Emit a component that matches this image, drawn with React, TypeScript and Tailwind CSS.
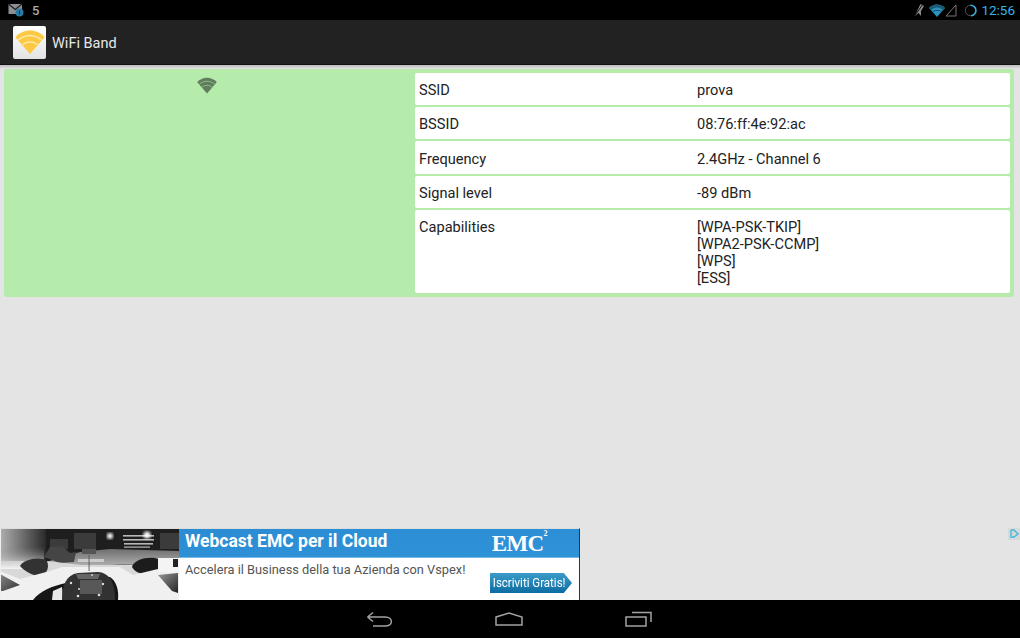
import React from "react";

const rows: { k: string; v: string[]; h: string }[] = [
  { k: "SSID", v: ["prova"], h: "h-8 pt-[9px]" },
  { k: "BSSID", v: ["08:76:ff:4e:92:ac"], h: "h-8 pt-[9px]" },
  { k: "Frequency", v: ["2.4GHz - Channel 6"], h: "h-[33px] pt-[10px]" },
  { k: "Signal level", v: ["-89 dBm"], h: "h-8 pt-[9px]" },
  { k: "Capabilities", v: ["[WPA-PSK-TKIP]", "[WPA2-PSK-CCMP]", "[WPS]", "[ESS]"], h: "h-[83px] pt-[9px]" },
];

function Wifi({ color, gap, className }: { color: string; gap: string; className?: string }) {
  return (
    <svg viewBox="0 0 40 32" className={className}>
      <path d="M0.5 9.5 C10 -2.5 30 -2.5 39.5 9.5 L20 32 Z" fill={color} />
      <g fill="none" stroke={gap} strokeWidth="1.5">
        <path d="M4.5 13.5 C13 5.5 27 5.5 35.5 13.5" />
        <path d="M10 19.5 C16 14.5 24 14.5 30 19.5" />
      </g>
    </svg>
  );
}

function F1Photo() {
  return (
    <svg viewBox="0 0 179 71" preserveAspectRatio="none" className="w-[179px] h-[71px] block">
      <defs>
        <linearGradient id="left" x1="0" y1="0" x2="1" y2="0">
          <stop offset="0" stopColor="#b0b0b0" />
          <stop offset="1" stopColor="#2a2a2a" />
        </linearGradient>
        <linearGradient id="track" x1="0" y1="0" x2="0" y2="1">
          <stop offset="0" stopColor="#6e6e6e" />
          <stop offset="1" stopColor="#b4b4b4" />
        </linearGradient>
        <linearGradient id="fade" x1="0" y1="0" x2="0" y2="1">
          <stop offset="0" stopColor="#888" stopOpacity="0" />
          <stop offset="1" stopColor="#f4f4f4" />
        </linearGradient>
        <linearGradient id="wingL" x1="0" y1="0" x2="1" y2="1">
          <stop offset="0" stopColor="#888" />
          <stop offset="1" stopColor="#333" />
        </linearGradient>
        <linearGradient id="wingR" x1="0" y1="0" x2="1" y2="1">
          <stop offset="0" stopColor="#999" />
          <stop offset="1" stopColor="#222" />
        </linearGradient>
        <filter id="b1"><feGaussianBlur stdDeviation="0.6" /></filter>
        <filter id="b2"><feGaussianBlur stdDeviation="1.6" /></filter>
      </defs>
      <rect width="179" height="71" fill="#1e1e1e" />
      <rect width="46" height="32" fill="url(#left)" />
      <g fill="#3a3a3a" filter="url(#b1)">
        <rect x="74" y="4" width="22" height="16" />
        <rect x="50" y="10" width="18" height="10" />
        <rect x="160" y="4" width="19" height="16" />
      </g>
      <g fill="#b8b8b8" filter="url(#b1)">
        <rect x="123" y="6" width="31" height="1.6" />
        <rect x="123" y="10" width="31" height="1.6" />
        <rect x="124" y="14" width="29" height="1.6" />
        <rect x="124" y="17.5" width="26" height="1.2" />
      </g>
      <circle cx="110" cy="7" r="3" fill="#fff" filter="url(#b2)" />
      <circle cx="147" cy="6" r="3.6" fill="#fff" filter="url(#b2)" />
      <path d="M46 33 L80 23 L110 20 L179 22 L179 34 L110 36 L60 38 Z" fill="url(#track)" filter="url(#b1)" />
      <path d="M44 28 L50 18 L62 17 L70 24 L76 23 L74 33 L60 34 Z" fill="#444" filter="url(#b1)" />
      <rect x="82" y="20" width="14" height="5" fill="#555" filter="url(#b1)" />
      <path d="M0 32 L46 32 L82 36 L120 36 L179 34 L179 71 L0 71 Z" fill="#d8d8d8" filter="url(#b1)" />
      <rect x="0" y="18" width="44" height="22" fill="url(#fade)" />
      <rect x="78" y="30" width="26" height="3" fill="#ccc" filter="url(#b1)" />
      <path d="M20 37 C24 30 40 27 47 32 C50 40 46 46 38 47 C32 46 24 42 20 37 Z" fill="#333" filter="url(#b1)" />
      <path d="M132 38 C134 30 150 27 158 30 L158 41 C150 47 136 46 132 38 Z" fill="#1c1c1c" filter="url(#b1)" />
      <path d="M0 42 L20 50 L50 42 L62 38 L120 38 L133 46 L158 40 L179 30 L179 71 L0 71 Z" fill="#f0f0f0" filter="url(#b1)" />
      <rect x="158" y="29" width="21" height="14" fill="#f4f4f4" />
      <rect x="173" y="30" width="5" height="8" fill="#222" />
      <path d="M0 45 L20 56 L3 62 L0 62 Z" fill="url(#wingL)" filter="url(#b1)" />
      <path d="M158 46 L178 44 L178 64 L172 62 Z" fill="url(#wingR)" filter="url(#b1)" />
      <path d="M33 71 C40 62 52 57 66 54 L66 71 Z" fill="#141414" filter="url(#b1)" />
      <path d="M52 71 L53 62 L62 58 L63 71 Z" fill="#e8e8e8" />
      <path d="M118 71 C119 60 116 52 110 48 L100 48 L100 71 Z" fill="#161616" filter="url(#b1)" />
      <path d="M62 71 C62 56 66 46 78 44 L98 43 C110 44 115 54 115 71 Z" fill="#333" filter="url(#b1)" />
      <rect x="80" y="51" width="22" height="14" fill="#595959" filter="url(#b1)" />
      <path d="M76 45 L100 45 L98 50 L78 50 Z" fill="#666" filter="url(#b1)" />
      <g fill="#dcdcdc">
        <circle cx="71" cy="54" r="1.2" />
        <circle cx="79" cy="60" r="1" />
        <circle cx="103" cy="55" r="1.2" />
        <circle cx="78" cy="67" r="1.3" />
        <circle cx="99" cy="66" r="1.3" />
        <circle cx="92" cy="46" r="0.9" />
      </g>
      <rect x="88.6" y="26" width="0.9" height="16" fill="#555" />
      <rect x="0" y="0" width="1" height="71" fill="#eee" />
    </svg>
  );
}

export default function App() {
  return (
    <div className="w-[1020px] h-[638px] flex flex-col bg-[#e4e4e4] overflow-hidden font-['Roboto',sans-serif]">
      {/* status bar */}
      <div className="h-5 bg-black flex items-center shrink-0">
        <svg viewBox="0 0 16 14" className="w-4 h-[14px] ml-2">
          <rect x="0.5" y="1" width="13.5" height="10" fill="#8b9096" />
          <path d="M0.5 1 L7.2 6.5 L14 1" fill="none" stroke="#1c1c1c" strokeWidth="1.2" />
          <circle cx="11.5" cy="9.5" r="4" fill="#2a7ba3" />
          <path d="M11.5 7.5 V11.5" stroke="#0d3448" strokeWidth="1" />
        </svg>
        <span className="ml-2 text-[13px] font-medium text-[#a9a9a9] leading-none pt-[1px]">5</span>
        <div className="ml-auto flex items-center">
          <svg viewBox="0 0 14 14" className="w-[14px] h-[14px] mr-[3px]">
            <path d="M8.5 1 L12 3 L9 8 L9 13 L6.5 10 L3 13 L5.5 7 Z" fill="#8a8a8a" />
            <path d="M2.5 13 L11 1" stroke="#111" strokeWidth="1" />
          </svg>
          <svg viewBox="0 0 16 13" className="w-4 h-[13px]">
            <path d="M0 4 C4 -0.7 12 -0.7 16 4 L8 13 Z" fill="#2c93bd" />
            <path d="M0 4 C4 -0.7 12 -0.7 16 4 L14 6.2 C10.5 2.6 5.5 2.6 2 6.2 Z" fill="#1b5a75" />
            <path d="M3.5 8 C6 5.8 10 5.8 12.5 8" fill="none" stroke="#0b3444" strokeWidth="0.8" />
          </svg>
          <svg viewBox="0 0 12 13" className="w-3 h-[13px] mr-[7px]">
            <path d="M11 1 L11 12 L1 12 Z" fill="none" stroke="#777" strokeWidth="1" />
          </svg>
          <svg viewBox="0 0 13 13" className="w-[13px] h-[13px] mr-[4px]">
            <circle cx="6.5" cy="6.5" r="5.2" fill="none" stroke="#555" strokeWidth="1" />
            <path d="M6.5 1.3 A5.2 5.2 0 0 1 7 11.7" fill="none" stroke="#36b0de" strokeWidth="1.5" />
          </svg>
          <span className="text-[13.5px] text-[#33b5e5] mr-[5px] leading-none pt-[1px]">12:56</span>
        </div>
      </div>

      {/* action bar */}
      <div className="h-[45px] bg-[#222222] flex items-center shrink-0 border-b border-[#111]">
        <div className="ml-[13px] w-[33px] h-[33px] rounded-[2px] bg-gradient-to-b from-white to-[#e3e3e3] flex items-center justify-center">
          <Wifi color="#fdc945" gap="#fdeeb8" className="w-[30px] h-[24px]" />
        </div>
        <span className="ml-[6px] text-[14.5px] text-[#e8e8e8] leading-none pt-1">WiFi Band</span>
      </div>
      <div className="h-1 shrink-0 bg-gradient-to-b from-[#bcbcbc] to-[#e4e4e4]" />

      {/* content */}
      <div className="flex-1 min-h-0">
        <div className="ml-1 w-[1010px] h-[228px] bg-[#b5ebab] rounded-[3px] flex p-1">
          <div className="w-[407px] shrink-0 flex justify-center">
            <Wifi color="#5f7d5c" gap="#a3cc9b" className="w-5 h-[17px] mt-1 ml-[-9px]" />
          </div>
          <div className="flex-1 flex flex-col gap-[2px]">
            {rows.map((r) => (
              <div key={r.k} className={`${r.h} bg-white rounded-[2px] flex text-[14.6px] leading-[17px] text-[#222]`}>
                <div className="w-[282px] pl-1 shrink-0">{r.k}</div>
                <div className="flex flex-col">
                  {r.v.map((l) => (
                    <span key={l}>{l}</span>
                  ))}
                </div>
              </div>
            ))}
          </div>
        </div>
      </div>

      {/* ad */}
      <div className="h-[72px] shrink-0 flex relative">
        <div className="w-[580px] h-full bg-white border-t border-[#ddd] border-r border-r-[#333] flex">
          <div className="w-[179px] shrink-0 h-full overflow-hidden">
            <F1Photo />
          </div>
          <div className="flex-1 flex flex-col min-w-0">
            <div className="h-[29px] bg-gradient-to-br from-[#2b8cd3] to-[#2f93d8] flex items-center justify-between shrink-0 border-b border-[#7ab8e6]">
              <span className="ml-[6px] text-[17.5px] font-bold text-white leading-none pb-[3px]">Webcast EMC per il Cloud</span>
              <span className="mr-[32px] text-white font-bold font-['Liberation_Serif',serif] text-[23px] leading-none tracking-tight flex">
                EMC<sup className="text-[8px] mt-[2px] top-0">2</sup>
              </span>
            </div>
            <div className="flex-1 relative">
              <span className="absolute left-[6px] top-[4px] text-[12.8px] text-[#555] leading-4 whitespace-nowrap">
                Accelera il Business della tua Azienda con Vspex!
              </span>
              <div className="absolute left-[311px] top-[15px] h-5 w-[82px] bg-gradient-to-b from-[#3a9cc8] to-[#0a6da3] flex items-center [clip-path:polygon(0_0,90%_0,100%_50%,90%_100%,0_100%)]">
                <span className="pl-[3px] text-[12.5px] text-white leading-none whitespace-nowrap scale-x-[0.92] origin-left">Iscriviti Gratis!</span>
              </div>
            </div>
          </div>
        </div>
        <div className="absolute right-0 top-0 w-[12px] h-[12px] bg-[#d6dadb] flex items-center justify-center">
          <svg viewBox="0 0 12 12" className="w-3 h-3">
            <path d="M3 2 L3 10 M3 2 L6 2 L10 6 L6 9 L4 9" fill="none" stroke="#44b8d8" strokeWidth="1.4" />
          </svg>
        </div>
      </div>

      {/* nav bar */}
      <div className="h-[38px] bg-black shrink-0 flex items-center justify-center gap-[102px] pr-[2px]">
        <svg viewBox="0 0 27 18" className="w-[27px] h-[18px]">
          <path d="M1.5 7 H19 C27.5 7 27.5 16 19 16 H7 M1.5 7 L7 2.5 M1.5 7 L7 11.5" fill="none" stroke="#a3a3a3" strokeWidth="1.5" />
        </svg>
        <svg viewBox="0 0 28 14" className="w-[28px] h-[14px]">
          <path d="M1 5 L14 1 L27 5 V13 H1 Z" fill="none" stroke="#a3a3a3" strokeWidth="1.5" />
        </svg>
        <svg viewBox="0 0 27 16" className="w-[27px] h-4">
          <rect x="1" y="6" width="20" height="9" fill="none" stroke="#a3a3a3" strokeWidth="1.5" />
          <path d="M7 1.5 H26 V11" fill="none" stroke="#a3a3a3" strokeWidth="1.5" />
        </svg>
      </div>
    </div>
  );
}
